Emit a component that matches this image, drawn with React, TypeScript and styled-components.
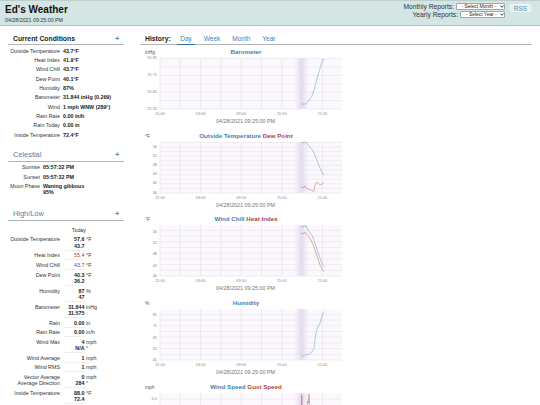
import React from 'react';
import styled, { createGlobalStyle } from 'styled-components';

const GlobalStyle = createGlobalStyle`
  html, body {
    margin: 0;
    padding: 0;
    height: 405px;
    overflow: hidden;
    background: #fff;
    font-family: "Liberation Sans", Arial, sans-serif;
    color: #222;
  }
`;

const Page = styled.div`
  width: 540px;
  height: 405px;
  overflow: hidden;
`;

const Header = styled.header`
  height: 26px;
  box-sizing: border-box;
  background: #d4e6e3;
  border-top: 1px solid #bccdcb;
  border-bottom: 1px solid #b4c4c4;
  display: flex;
  justify-content: space-between;
  padding: 0 9px 0 5px;
`;

const Brand = styled.div`
  padding-top: 4px;
`;

const Title = styled.h1`
  margin: 0;
  font-size: 10px;
  line-height: 10px;
  font-weight: bold;
  color: #111;
`;

const Stamp = styled.div`
  margin-top: 2px;
  font-size: 5.3px;
  line-height: 6px;
  color: #333;
`;

const Reports = styled.div`
  display: flex;
  gap: 5px;
  padding-top: 2px;
`;

const ReportRows = styled.div`
  display: flex;
  flex-direction: column;
  align-items: flex-end;
  gap: 1px;
`;

const ReportRow = styled.div`
  display: flex;
  align-items: center;
  gap: 2px;
  font-size: 6.7px;
  line-height: 7px;
  color: #333;
`;

const SelectBox = styled.span`
  position: relative;
  display: block;
  height: 7px;
`;

const Select = styled.select<{ $w: number; $pad: number }>`
  display: block;
  appearance: none;
  box-sizing: border-box;
  width: ${(p) => p.$w}px;
  height: 7px;
  padding: 0 0 0 ${(p) => p.$pad}px;
  font-size: 4.9px;
  line-height: 5px;
  font-family: "Liberation Sans", Arial, sans-serif;
  background: #fff;
  border: 0.6px solid #9aa;
  border-radius: 1px;
  color: #222;
`;

const Chevron = styled.svg`
  position: absolute;
  right: 1.5px;
  top: 2.3px;
`;

const RssButton = styled.a`
  box-sizing: border-box;
  width: 21px;
  height: 8px;
  margin-top: 0.5px;
  background: #e6f0ee;
  border: 0.6px solid #f4f8f8;
  border-radius: 1.5px;
  text-align: center;
  font-size: 6.5px;
  line-height: 7px;
  color: #5e8fb8;
`;

const Body = styled.main`
  display: flex;
  padding: 5px 8px 0 8px;
  gap: 16px;
`;

const Side = styled.aside`
  width: 116px;
  flex: none;
`;

const Section = styled.section<{ $gap: number }>`
  margin-bottom: ${(p) => p.$gap}px;
`;

const SectionHead = styled.div`
  display: flex;
  justify-content: space-between;
  align-items: flex-end;
  height: 14px;
  padding: 0 5px 1.5px 5px;
  border-bottom: 1px solid #b4b4b4;
  box-sizing: border-box;
`;

const SectionTitle = styled.h2<{ $accent?: boolean }>`
  margin: 0;
  font-size: ${(p) => (p.$accent ? 7.4 : 6.8)}px;
  line-height: 8px;
  font-weight: ${(p) => (p.$accent ? 'normal' : 'bold')};
  color: ${(p) => (p.$accent ? '#4282b4' : '#222')};
`;

const Plus = styled.span`
  font-size: 6.5px;
  line-height: 8px;
  font-weight: bold;
  color: #4282b4;
`;

const InfoTable = styled.div<{ $label: number }>`
  display: grid;
  grid-template-columns: ${(p) => p.$label}px 1fr;
  column-gap: 3px;
  padding-top: 2.7px;
  font-size: 5.35px;
  line-height: 6.4px;
`;

const InfoLabel = styled.div`
  text-align: right;
  color: #333;
  padding-bottom: 2.95px;
  white-space: nowrap;
`;

const InfoValue = styled.div`
  font-weight: bold;
  color: #222;
  white-space: pre-line;
`;

const TodayHead = styled.div`
  width: 84px;
  text-align: right;
  font-size: 5.35px;
  line-height: 6.4px;
  padding: 6px 6px 1.5px 0;
  box-sizing: border-box;
  color: #333;
`;

const HighLowRow = styled.div`
  display: grid;
  grid-template-columns: 52px 23px 1fr;
  column-gap: 1.5px;
  font-size: 5.35px;
  line-height: 6.4px;
`;

const HighLowLabel = styled.div`
  text-align: right;
  color: #333;
  padding-top: 1.6px;
  white-space: nowrap;
`;

const HighLowCell = styled.div<{ $tone?: string }>`
  text-align: right;
  font-weight: ${(p) => (p.$tone ? 'normal' : 'bold')};
  color: ${(p) => p.$tone || '#222'};
  border-bottom: 1px solid #eee;
  padding: 1.6px 0 0.6px;
  margin-left: 2px;
`;

const HighLowUnit = styled.div`
  color: #333;
  padding-top: 1.6px;
`;

const Main = styled.div`
  flex: 1;
  min-width: 0;
`;

const HistoryBar = styled.nav`
  display: flex;
  align-items: flex-end;
  height: 14px;
  box-sizing: border-box;
  padding-left: 5px;
  border-bottom: 1px solid #b4b4b4;
  gap: 6px;
`;

const HistoryLabel = styled.span`
  font-size: 6.8px;
  line-height: 10px;
  font-weight: bold;
  margin-right: 0.5px;
`;

const HistoryTab = styled.span<{ $active?: boolean }>`
  font-size: 6.5px;
  line-height: 10px;
  height: 11px;
  box-sizing: border-box;
  padding: 0 3px;
  color: #4282b4;
  border-bottom: 1px solid ${(p) => (p.$active ? '#2f6fa3' : 'transparent')};
  margin-bottom: -1px;
`;

const ChartFrame = styled.div`
  height: 83.7px;
`;

const ChartSvg = styled.svg`
  display: block;
`;

type Line = { color: string; points: [number, number][] };

type ChartProps = {
  unit: string;
  titles: { text: string; color: string }[];
  ticks: { label: string; y: number }[];
  rowStep: number;
  lines: Line[];
};

const PLOT_X = 20;
const PLOT_W = 182;
const PLOT_Y = 13;
const PLOT_H = 51;
const BLUE = '#4282b4';
const RED = '#b44242';

const hours = ['21:00', '03:00', '09:00', '15:00', '21:00'];

const Chart: React.FC<ChartProps> = ({ unit, titles, ticks, rowStep, lines }) => {
  const bandId = `band-${titles[0].text.replace(/\W/g, '')}`;
  const rows: number[] = [];
  for (let y = PLOT_H; y > 0; y -= rowStep) rows.push(y);
  const cols = Array.from({ length: 9 }, (_, i) => i * 20.3);

  return (
    <ChartFrame>
      <ChartSvg width="205" height="84" fontFamily="'Liberation Sans', Arial, sans-serif">
        <defs>
          <linearGradient id={bandId} x1="0" x2="1" y1="0" y2="0">
            <stop offset="0" stopColor="#e9dff3" stopOpacity="0" />
            <stop offset="0.5" stopColor="#e3d8f0" />
            <stop offset="1" stopColor="#e9dff3" stopOpacity="0" />
          </linearGradient>
        </defs>
        <text x="5" y="9" fontSize="4.8" fill="#555">{unit}</text>
        <text x="106" y="9" fontSize="6.2" fontWeight="bold" textAnchor="middle">
          {titles.map((t, i) => (
            <tspan key={t.text} fill={t.color}>{(i > 0 ? ' ' : '') + t.text}</tspan>
          ))}
        </text>
        <g transform={`translate(${PLOT_X} ${PLOT_Y})`}>
          <rect width={PLOT_W} height={PLOT_H} fill="#fbf9fd" />
          <rect x="134" width="15" height={PLOT_H} fill={`url(#${bandId})`} />
          {rows.map((y) => (
            <line key={y} x1="0" x2={PLOT_W} y1={y} y2={y} stroke="#e9e5ec" strokeWidth="0.7" />
          ))}
          {cols.map((x) => (
            <line key={x} x1={x} x2={x} y1="0" y2={PLOT_H} stroke="#e6e2ea" strokeWidth="0.7" />
          ))}
          {lines.map((l) => (
            <polyline
              key={l.color}
              points={l.points.map((p) => p.join(',')).join(' ')}
              fill="none"
              stroke={l.color}
              strokeOpacity="0.7"
              strokeWidth="0.6"
            />
          ))}
        </g>
        {ticks.map((t) => (
          <text key={t.label} x="17" y={PLOT_Y + t.y + 1.4} fontSize="3.9" fill="#888" textAnchor="end">{t.label}</text>
        ))}
        {hours.map((h, i) => (
          <text key={i} x={PLOT_X + i * 40.6} y={PLOT_Y + PLOT_H + 5.6} fontSize="3.9" fill="#888" textAnchor="middle">{h}</text>
        ))}
        <text x="105.5" y={PLOT_Y + PLOT_H + 13.5} fontSize="5.4" fill="#777" textAnchor="middle">04/28/2021 09:25:00 PM</text>
      </ChartSvg>
    </ChartFrame>
  );
};

const charts: ChartProps[] = [
  {
    unit: 'inHg',
    titles: [{ text: 'Barometer', color: BLUE }],
    rowStep: 8.4,
    ticks: [
      { label: '31.85', y: 0 },
      { label: '31.75', y: 17 },
      { label: '31.65', y: 34 },
      { label: '31.55', y: 51 },
    ],
    lines: [
      {
        color: BLUE,
        points: [[141.3, 46], [145.7, 46], [148.3, 43], [151.7, 38.7], [154, 32], [156.7, 22], [160, 10.3], [162.7, 2], [164.3, 1]],
      },
    ],
  },
  {
    unit: '°F',
    titles: [{ text: 'Outside Temperature', color: BLUE }, { text: 'Dew Point', color: RED }],
    rowStep: 4.6,
    ticks: [
      { label: '56', y: 4.3 },
      { label: '52', y: 13.3 },
      { label: '48', y: 22.7 },
      { label: '44', y: 32 },
      { label: '40', y: 41 },
      { label: '36', y: 50.3 },
    ],
    lines: [
      {
        color: BLUE,
        points: [[141.3, 0.7], [145.7, 0], [148.3, 3.3], [152.7, 8.3], [156.7, 17.7], [160, 26], [162.7, 31.7], [164.3, 32.7]],
      },
      {
        color: RED,
        points: [[141.3, 44.7], [143.3, 46], [145, 43.7], [146.7, 46.7], [150, 47.7], [154, 49.3], [155.3, 42], [157, 40], [160, 42.7], [162.3, 42], [164.3, 40]],
      },
    ],
  },
  {
    unit: '°F',
    titles: [{ text: 'Wind Chill', color: BLUE }, { text: 'Heat Index', color: RED }],
    rowStep: 5.7,
    ticks: [
      { label: '56', y: 6.3 },
      { label: '52', y: 17.7 },
      { label: '48', y: 29 },
      { label: '44', y: 40.7 },
      { label: '40', y: 51 },
    ],
    lines: [
      {
        color: BLUE,
        points: [[141.3, 2.3], [145.7, 0.7], [148.3, 5], [152.7, 11.7], [156.7, 23.3], [160, 33], [162.7, 40], [164.3, 41.7]],
      },
      {
        color: RED,
        points: [[141.3, 9], [145.7, 7.7], [150, 13.3], [153.3, 20], [156.7, 30], [160, 40], [162.7, 45], [164.3, 46.7]],
      },
    ],
  },
  {
    unit: '%',
    titles: [{ text: 'Humidity', color: BLUE }],
    rowStep: 5.7,
    ticks: [
      { label: '85', y: 5.7 },
      { label: '75', y: 17 },
      { label: '65', y: 28.3 },
      { label: '55', y: 39.3 },
      { label: '45', y: 50.7 },
    ],
    lines: [
      {
        color: BLUE,
        points: [[141.3, 45.3], [143.3, 47], [145.7, 45.3], [148.3, 46], [151.7, 43.3], [154, 39.3], [155.3, 27.7], [157.3, 19.3], [160, 14.3], [162.7, 4.3], [164.3, 2.7]],
      },
    ],
  },
  {
    unit: 'mph',
    titles: [{ text: 'Wind Speed', color: BLUE }, { text: 'Gust Speed', color: RED }],
    rowStep: 6.4,
    ticks: [{ label: '4.0', y: 6 }],
    lines: [
      {
        color: RED,
        points: [[141.5, 51], [141.8, 2], [142.2, 51], [147, 51], [147.5, 8], [148.3, 10], [149, 1], [149.6, 10], [150.2, 51]],
      },
    ],
  },
];

const current = [
  ['Outside Temperature', '43.7°F'],
  ['Heat Index', '41.9°F'],
  ['Wind Chill', '43.7°F'],
  ['Dew Point', '40.1°F'],
  ['Humidity', '87%'],
  ['Barometer', '31.844 inHg (0.269)'],
  ['Wind', '1 mph WNW (289°)'],
  ['Rain Rate', '0.00 in/h'],
  ['Rain Today', '0.00 in'],
  ['Inside Temperature', '72.4°F'],
];

const celestial = [
  ['Sunrise', '05:57:32 PM'],
  ['Sunset', '05:57:32 PM'],
  ['Moon Phase', 'Waning gibbous\n95%'],
];

type HighLow = { label: string[]; values: string[]; units: string[]; tone?: string };

const highLow: HighLow[] = [
  { label: ['Outside Temperature'], values: ['57.6', '43.7'], units: ['°F'] },
  { label: ['Heat Index'], values: ['55.4'], units: ['°F'], tone: '#b44242' },
  { label: ['Wind Chill'], values: ['43.7'], units: ['°F'], tone: '#4a4aa8' },
  { label: ['Dew Point'], values: ['40.3', '36.2'], units: ['°F'] },
  { label: ['Humidity'], values: ['87', '47'], units: ['%'] },
  { label: ['Barometer'], values: ['31.844', '31.575'], units: ['inHg'] },
  { label: ['Rain'], values: ['0.00'], units: ['in'] },
  { label: ['Rain Rate'], values: ['0.00'], units: ['in/h'] },
  { label: ['Wind Max'], values: ['4', 'N/A'], units: ['mph', '°'] },
  { label: ['Wind Average'], values: ['1'], units: ['mph'] },
  { label: ['Wind RMS'], values: ['1'], units: ['mph'] },
  { label: ['Vector Average', 'Average Direction'], values: ['0', '284'], units: ['mph', '°'] },
  { label: ['Inside Temperature'], values: ['88.0', '72.4'], units: ['°F'] },
];

const stack = (items: string[]) =>
  items.map((t, i) => <div key={i}>{t}</div>);

const ReportSelect: React.FC<{ width: number; pad: number; label: string }> = ({ width, pad, label }) => (
  <SelectBox>
    <Select $w={width} $pad={pad}><option>{label}</option></Select>
    <Chevron width="4" height="3" viewBox="0 0 4 3">
      <path d="M0.4 0.5 L2 2.3 L3.6 0.5" fill="none" stroke="#222" strokeWidth="0.9" />
    </Chevron>
  </SelectBox>
);

export default function App() {
  return (
    <Page>
      <GlobalStyle />
      <Header>
        <Brand>
          <Title>Ed's Weather</Title>
          <Stamp>04/28/2021 09:25:00 PM</Stamp>
        </Brand>
        <Reports>
          <ReportRows>
            <ReportRow>
              Monthly Reports:
              <ReportSelect width={49} pad={4.5} label="- Select Month -" />
            </ReportRow>
            <ReportRow>
              Yearly Reports:
              <ReportSelect width={45} pad={5} label="- Select Year -" />
            </ReportRow>
          </ReportRows>
          <RssButton>RSS</RssButton>
        </Reports>
      </Header>
      <Body>
        <Side>
          <Section $gap={6.5}>
            <SectionHead>
              <SectionTitle>Current Conditions</SectionTitle>
              <Plus>+</Plus>
            </SectionHead>
            <InfoTable $label={52}>
              {current.map(([k, v]) => (
                <React.Fragment key={k}>
                  <InfoLabel>{k}</InfoLabel>
                  <InfoValue>{v}</InfoValue>
                </React.Fragment>
              ))}
            </InfoTable>
          </Section>
          <Section $gap={11}>
            <SectionHead>
              <SectionTitle $accent>Celestial</SectionTitle>
              <Plus>+</Plus>
            </SectionHead>
            <InfoTable $label={32}>
              {celestial.map(([k, v]) => (
                <React.Fragment key={k}>
                  <InfoLabel>{k}</InfoLabel>
                  <InfoValue>{v}</InfoValue>
                </React.Fragment>
              ))}
            </InfoTable>
          </Section>
          <Section $gap={0}>
            <SectionHead>
              <SectionTitle $accent>High/Low</SectionTitle>
              <Plus>+</Plus>
            </SectionHead>
            <TodayHead>Today</TodayHead>
            {highLow.map((r) => (
              <HighLowRow key={r.label[0]}>
                <HighLowLabel>{stack(r.label)}</HighLowLabel>
                <HighLowCell $tone={r.tone}>{stack(r.values)}</HighLowCell>
                <HighLowUnit>{stack(r.units)}</HighLowUnit>
              </HighLowRow>
            ))}
          </Section>
        </Side>
        <Main>
          <HistoryBar>
            <HistoryLabel>History:</HistoryLabel>
            <HistoryTab $active>Day</HistoryTab>
            <HistoryTab>Week</HistoryTab>
            <HistoryTab>Month</HistoryTab>
            <HistoryTab>Year</HistoryTab>
          </HistoryBar>
          {charts.map((c) => (
            <Chart key={c.titles[0].text} {...c} />
          ))}
        </Main>
      </Body>
    </Page>
  );
}
